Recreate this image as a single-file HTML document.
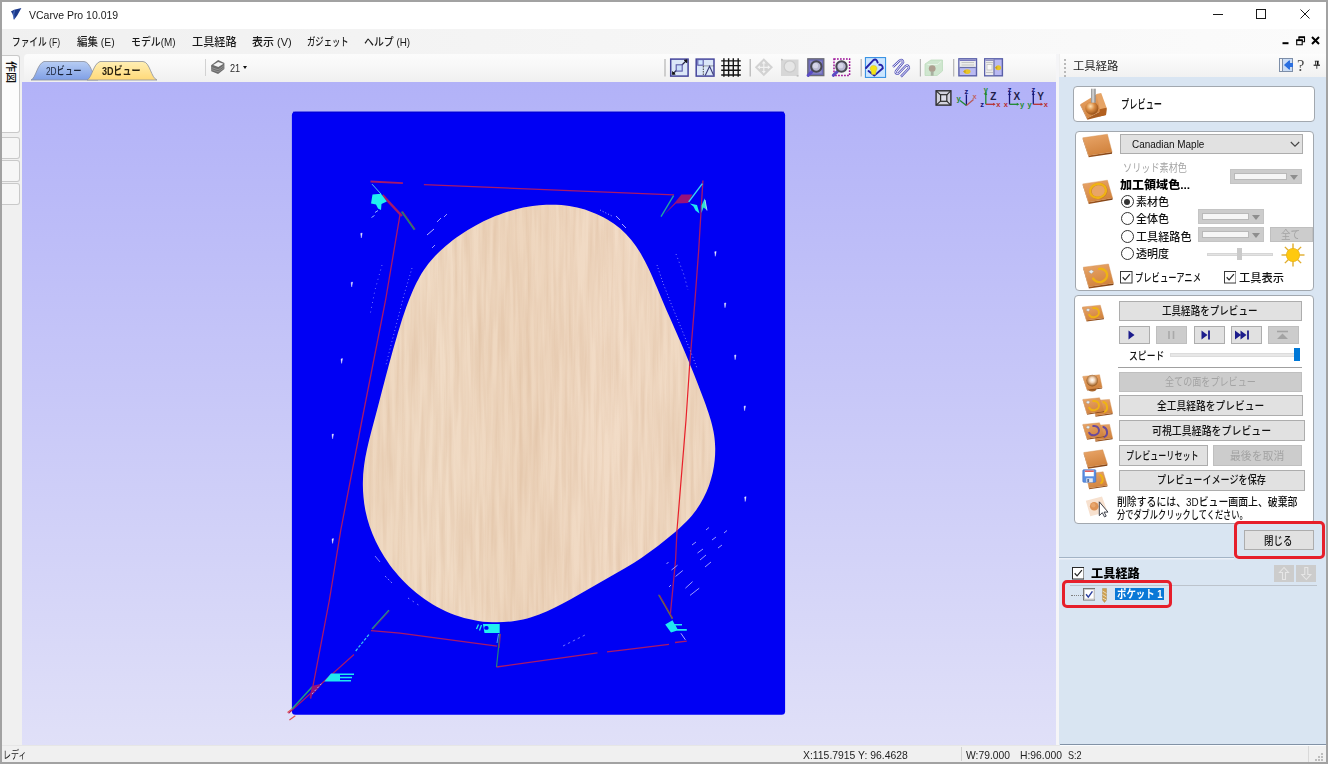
<!DOCTYPE html>
<html lang="ja"><head><meta charset="utf-8"><title>VCarve Pro 10.019</title>
<style>
html,body{margin:0;padding:0}
body{width:1328px;height:764px;position:relative;overflow:hidden;background:#f0f0f0;font-family:"Liberation Sans","Noto Sans CJK JP",sans-serif;font-size:12px;color:#000}
div,span,svg{position:absolute;box-sizing:border-box}
.t{white-space:nowrap;transform-origin:0 50%;display:block}
.btn{background:#e1e1e1;border:1px solid #adadad}
.btn.dis{background:#cccccc;border-color:#bfbfbf}
.box{background:#fff;border:1px solid #a2a8af;border-radius:4px}
.cdd{background:#cccccc;border:1px solid #c4c4c4}
.cdd i{position:absolute;left:3px;top:3px;right:14px;bottom:3px;background:#f6f6f6;border:1px solid #b9b9b9}
.cdd b{position:absolute;right:3px;top:4.500px;width:0;height:0;border-left:4.500px solid transparent;border-right:4.500px solid transparent;border-top:5px solid #8e8e8e}
.radio{width:13px;height:13px;border:1px solid #333;border-radius:50%;background:#fff}
.radio.on::after{content:"";position:absolute;left:2.5px;top:2.5px;width:6px;height:6px;border-radius:50%;background:#333}
.chk{width:13px;height:13px;border:1px solid #333;background:#fff}

</style></head>
<body>
<div style="left:0;top:0;width:1328px;height:764px;background:#a2a2a2"></div>
<div style="left:2px;top:2px;width:1324px;height:760px;background:#f0f0f0"></div>
<div style="left:2px;top:2px;width:1324px;height:27px;background:#fff"></div>
<svg style="left:10px;top:8px" width="12" height="12.500" viewBox="0 0 12 12.500"><path d="M11.400 0L4.100 1.700L0.900 3.400Q2 4.600 2.400 5.800L3.400 9L3.900 12L7.200 7.400Z" fill="#1c3a8c"/><path d="M4.400 2.300Q3.200 6 4 11" stroke="#5a7fd0" stroke-width="0.900" fill="none"/></svg>
<span class="t" style='left:28.6px;top:7.36px;font-size:11px;line-height:17px;color:#1a1a1a;transform:scaleX(0.9534);'>VCarve Pro 10.019</span>
<svg style="left:1200px;top:2px" width="126" height="27" viewBox="0 0 126 27" fill="none" stroke="#1a1a1a" stroke-width="1"><path d="M13 12.5H23"/><rect x="56.5" y="7.5" width="9" height="9"/><path d="M100.5 7.5L109.5 16.5M109.5 7.5L100.5 16.5"/></svg>
<div style="left:2px;top:29px;width:1324px;height:25px;background:linear-gradient(to right,#f0f0f0,#f5f5f5 45%,#fbfbfb)"></div>
<span class="t" style='left:12.3px;top:34.17px;font-size:11.2px;line-height:17px;font-weight:500;color:#1a1a1a;transform:scaleX(0.7755);'>ファイル (F)</span>
<span class="t" style='left:77.4px;top:34.17px;font-size:11.2px;line-height:17px;font-weight:500;color:#1a1a1a;transform:scaleX(0.9330);'>編集 (E)</span>
<span class="t" style='left:130.5px;top:34.17px;font-size:11.2px;line-height:17px;font-weight:500;color:#1a1a1a;transform:scaleX(0.8839);'>モデル(M)</span>
<span class="t" style='left:191.7px;top:34.17px;font-size:11.2px;line-height:17px;font-weight:500;color:#1a1a1a;transform:scaleX(0.9985);'>工具経路</span>
<span class="t" style='left:252.3px;top:34.17px;font-size:11.2px;line-height:17px;font-weight:500;color:#1a1a1a;transform:scaleX(0.9825);'>表示 (V)</span>
<span class="t" style='left:307.4px;top:34.17px;font-size:11.2px;line-height:17px;font-weight:500;color:#1a1a1a;transform:scaleX(0.7435);'>ガジェット</span>
<span class="t" style='left:364.3px;top:34.17px;font-size:11.2px;line-height:17px;font-weight:500;color:#1a1a1a;transform:scaleX(0.8831);'>ヘルプ (H)</span>
<svg style="left:1278px;top:33px" width="46" height="16" viewBox="0 0 46 16" fill="none" stroke="#000"><path d="M4.500 10.200H10.500" stroke-width="2"/><path d="M21 4.200h5.500v4.500h-5.500z" stroke-width="1.100" fill="#f8f8f8"/><path d="M20.500 4.200h6.500" stroke-width="1.800"/><path d="M18.700 7.200h5.500v4.500h-5.500z" stroke-width="1.100" fill="#f8f8f8"/><path d="M18.200 7.200h6.500" stroke-width="1.800"/><path d="M34 4L41 11M41 4L34 11" stroke-width="2"/></svg>
<div style="left:2px;top:54px;width:20px;height:691px;background:#f0f0f0"></div>
<div style="left:2px;top:55px;width:18px;height:78px;background:#fcfcfc;border:1px solid #c9c9c9;border-left:none;border-radius:0 3px 3px 0"></div>
<div style="left:2px;top:137px;width:18px;height:22px;background:#f6f6f6;border:1px solid #c9c9c9;border-left:none;border-radius:0 3px 3px 0"></div>
<div style="left:2px;top:160px;width:18px;height:22px;background:#f6f6f6;border:1px solid #c9c9c9;border-left:none;border-radius:0 3px 3px 0"></div>
<div style="left:2px;top:183px;width:18px;height:22px;background:#f6f6f6;border:1px solid #c9c9c9;border-left:none;border-radius:0 3px 3px 0"></div>
<span class="t" style="left:4px;top:61px;font-size:11px;line-height:13px;writing-mode:vertical-rl;text-orientation:sideways;font-weight:500;color:#111">作図</span>
<div style="left:24px;top:54px;width:1032px;height:28px;background:linear-gradient(#fcfcfc,#f8f8f8 40%,#f0f0f0);border-radius:4px 0 0 0"></div>
<svg style="left:24px;top:56px" width="140" height="26" viewBox="0 0 140 26"><defs><linearGradient id="g2d" x1="0" y1="0" x2="0" y2="1"><stop offset="0" stop-color="#b7cdf3"/><stop offset="1" stop-color="#7f9fe6"/></linearGradient><linearGradient id="g3d" x1="0" y1="0" x2="0" y2="1"><stop offset="0" stop-color="#ffefb4"/><stop offset="1" stop-color="#ffd978"/></linearGradient></defs><path d="M7 24 C12 22 13 8 20 5.500 L60 5.500 C67 6 68 20 74 24 Z" fill="url(#g2d)" stroke="#8a8f9c" stroke-width="0.8"/><path d="M63 24 C68 22 69 8 76 5.500 L119 5.500 C126 6 127 22 133 24 Z" fill="url(#g3d)" stroke="#8a8f9c" stroke-width="0.8"/></svg>
<span class="t" style='left:45.9px;top:63.16px;font-size:11px;line-height:17px;font-weight:500;color:#1a2438;transform:scaleX(0.7543);'>2Dビュー</span>
<span class="t" style='left:102px;top:63.16px;font-size:11px;line-height:17px;font-weight:700;color:#2a2210;transform:scaleX(0.8181);'>3Dビュー</span>
<div style="left:204.500px;top:59px;width:1.500px;height:17px;background:#d2d2d2"></div>
<svg style="left:210px;top:59px" width="16" height="16" viewBox="210 59 16 16"><path d="M211.100 65.300L218.100 60.100L224.400 63V68.900L218.100 73.900L211.300 71.200Z" fill="#6c6c6c"/><path d="M213.100 65.100L218.100 61.900L223.500 63.700L218.300 67.100Z" fill="#f4f4f4"/><path d="M211.600 67.600L218.200 69.800L224.200 65.600M211.600 69.600L218.200 71.800L224.200 67.600" stroke="#a2a2a2" stroke-width="0.700" fill="none"/></svg>
<span class="t" style='left:229.7px;top:59.97px;font-size:11.2px;line-height:17px;color:#2a2a2a;transform:scaleX(0.8191);'>21</span>
<div style="left:243.300px;top:66px;width:0;height:0;border-left:2.700px solid transparent;border-right:2.700px solid transparent;border-top:3px solid #111"></div>
<div style="left:22px;top:82px;width:1034px;height:663px;background:linear-gradient(#b2b2f8,#e0e0f8)"></div>
<svg style="left:22px;top:82px" width="1034" height="663" viewBox="22 82 1034 663"><defs><linearGradient id="wg" x1="0" y1="0" x2="1" y2="0"><stop offset="0" stop-color="#eed7bf"/><stop offset="0.220" stop-color="#f1dcc6"/><stop offset="0.450" stop-color="#eed6be"/><stop offset="0.700" stop-color="#f2dcc7"/><stop offset="1" stop-color="#efd8c1"/></linearGradient><clipPath id="wc"><path d="M532.7 205.9C537.0 205.3 541.4 204.8 546.2 204.7C551.0 204.6 556.3 204.6 561.4 205.1C566.5 205.6 571.9 206.4 577.1 207.6C582.3 208.8 587.6 210.4 592.6 212.4C597.7 214.3 602.7 216.7 607.3 219.4C611.9 222.1 616.2 225.2 620.2 228.6C624.2 232.1 627.9 235.9 631.3 240.1C634.7 244.2 637.8 248.9 640.7 253.6C643.6 258.4 646.2 263.5 648.7 268.7C651.2 273.8 653.3 279.0 655.6 284.5C658.0 289.9 660.2 295.4 662.8 301.4C665.3 307.3 668.1 313.6 671.0 320.2C673.9 326.9 677.1 334.0 680.1 341.1C683.2 348.3 686.5 355.9 689.5 363.2C692.5 370.5 695.6 378.1 698.2 385.0C700.9 391.9 703.5 398.7 705.7 404.7C707.8 410.7 709.6 416.0 711.0 421.1C712.4 426.1 713.4 430.5 714.1 434.9C714.8 439.4 715.1 443.5 715.2 447.7C715.3 451.9 715.1 456.1 714.7 460.3C714.3 464.5 713.6 468.6 712.7 472.8C711.7 477.0 710.5 481.2 709.0 485.4C707.5 489.6 705.7 493.9 703.5 498.0C701.4 502.1 699.0 506.1 696.2 510.0C693.4 513.9 690.4 517.4 686.7 521.3C683.0 525.1 678.7 529.0 674.0 533.1C669.2 537.1 663.6 541.7 658.2 545.8C652.9 549.9 647.1 554.0 641.7 557.7C636.3 561.3 631.0 564.5 625.7 567.7C620.4 570.9 615.2 573.8 610.0 576.8C604.8 579.8 599.5 582.7 594.3 585.7C589.1 588.7 583.8 591.8 578.6 594.8C573.3 597.8 568.1 600.8 562.8 603.6C557.6 606.3 552.4 609.0 547.1 611.3C541.8 613.6 536.6 615.6 531.2 617.2C525.8 618.9 520.3 620.2 514.6 621.0C508.9 621.9 502.9 622.3 496.8 622.3C490.8 622.3 484.5 621.9 478.2 620.9C472.0 620.0 465.7 618.5 459.5 616.5C453.3 614.6 447.1 612.0 441.2 609.0C435.3 606.0 429.5 602.5 424.1 598.7C418.7 594.9 413.5 590.6 408.7 586.2C403.9 581.8 399.4 577.0 395.4 572.1C391.3 567.3 387.7 562.1 384.4 557.0C381.1 551.9 378.3 546.6 375.8 541.5C373.3 536.3 371.3 531.2 369.6 526.2C367.9 521.2 366.6 516.4 365.6 511.5C364.6 506.7 363.9 502.0 363.5 497.1C363.0 492.2 362.8 487.3 362.9 482.1C362.9 477.0 363.3 471.8 364.0 466.3C364.7 460.8 365.7 455.1 367.0 449.3C368.2 443.4 369.9 437.3 371.4 431.2C373.0 425.0 374.7 418.9 376.4 412.4C378.1 405.9 379.8 399.4 381.6 392.4C383.4 385.4 385.4 377.8 387.4 370.4C389.4 363.0 391.6 354.9 393.6 347.8C395.7 340.6 397.7 333.5 399.7 327.2C401.6 321.0 403.4 315.5 405.2 310.3C407.0 305.1 408.7 300.6 410.6 296.0C412.5 291.4 414.3 287.1 416.5 282.8C418.7 278.5 420.9 274.3 423.7 270.2C426.5 266.0 429.6 261.9 433.3 257.9C436.9 253.8 441.2 249.8 445.7 246.0C450.1 242.2 455.2 238.4 460.2 235.0C465.2 231.6 470.5 228.3 475.7 225.5C480.9 222.6 486.3 220.0 491.4 217.8C496.5 215.6 501.8 213.7 506.6 212.1C511.4 210.5 515.8 209.3 520.1 208.2C524.5 207.2 528.3 206.5 532.7 205.9Z"/></clipPath><filter id="grain" x="0" y="0" width="100%" height="100%" color-interpolation-filters="sRGB"><feTurbulence type="fractalNoise" baseFrequency="0.220 0.010" numOctaves="3" seed="11"/><feColorMatrix type="matrix" values="0 0 0 0 0.700  0 0 0 0 0.480  0 0 0 0 0.300  0.300 0 0 0 -0.090"/></filter></defs><rect x="291.900" y="111.700" width="493.200" height="603.100" rx="3.500" fill="#0000f4"/><rect x="293" y="111.700" width="491" height="1" fill="#0000d0"/><path d="M532.7 205.9C537.0 205.3 541.4 204.8 546.2 204.7C551.0 204.6 556.3 204.6 561.4 205.1C566.5 205.6 571.9 206.4 577.1 207.6C582.3 208.8 587.6 210.4 592.6 212.4C597.7 214.3 602.7 216.7 607.3 219.4C611.9 222.1 616.2 225.2 620.2 228.6C624.2 232.1 627.9 235.9 631.3 240.1C634.7 244.2 637.8 248.9 640.7 253.6C643.6 258.4 646.2 263.5 648.7 268.7C651.2 273.8 653.3 279.0 655.6 284.5C658.0 289.9 660.2 295.4 662.8 301.4C665.3 307.3 668.1 313.6 671.0 320.2C673.9 326.9 677.1 334.0 680.1 341.1C683.2 348.3 686.5 355.9 689.5 363.2C692.5 370.5 695.6 378.1 698.2 385.0C700.9 391.9 703.5 398.7 705.7 404.7C707.8 410.7 709.6 416.0 711.0 421.1C712.4 426.1 713.4 430.5 714.1 434.9C714.8 439.4 715.1 443.5 715.2 447.7C715.3 451.9 715.1 456.1 714.7 460.3C714.3 464.5 713.6 468.6 712.7 472.8C711.7 477.0 710.5 481.2 709.0 485.4C707.5 489.6 705.7 493.9 703.5 498.0C701.4 502.1 699.0 506.1 696.2 510.0C693.4 513.9 690.4 517.4 686.7 521.3C683.0 525.1 678.7 529.0 674.0 533.1C669.2 537.1 663.6 541.7 658.2 545.8C652.9 549.9 647.1 554.0 641.7 557.7C636.3 561.3 631.0 564.5 625.7 567.7C620.4 570.9 615.2 573.8 610.0 576.8C604.8 579.8 599.5 582.7 594.3 585.7C589.1 588.7 583.8 591.8 578.6 594.8C573.3 597.8 568.1 600.8 562.8 603.6C557.6 606.3 552.4 609.0 547.1 611.3C541.8 613.6 536.6 615.6 531.2 617.2C525.8 618.9 520.3 620.2 514.6 621.0C508.9 621.9 502.9 622.3 496.8 622.3C490.8 622.3 484.5 621.9 478.2 620.9C472.0 620.0 465.7 618.5 459.5 616.5C453.3 614.6 447.1 612.0 441.2 609.0C435.3 606.0 429.5 602.5 424.1 598.7C418.7 594.9 413.5 590.6 408.7 586.2C403.9 581.8 399.4 577.0 395.4 572.1C391.3 567.3 387.7 562.1 384.4 557.0C381.1 551.9 378.3 546.6 375.8 541.5C373.3 536.3 371.3 531.2 369.6 526.2C367.9 521.2 366.6 516.4 365.6 511.5C364.6 506.7 363.9 502.0 363.5 497.1C363.0 492.2 362.8 487.3 362.9 482.1C362.9 477.0 363.3 471.8 364.0 466.3C364.7 460.8 365.7 455.1 367.0 449.3C368.2 443.4 369.9 437.3 371.4 431.2C373.0 425.0 374.7 418.9 376.4 412.4C378.1 405.9 379.8 399.4 381.6 392.4C383.4 385.4 385.4 377.8 387.4 370.4C389.4 363.0 391.6 354.9 393.6 347.8C395.7 340.6 397.7 333.5 399.7 327.2C401.6 321.0 403.4 315.5 405.2 310.3C407.0 305.1 408.7 300.6 410.6 296.0C412.5 291.4 414.3 287.1 416.5 282.8C418.7 278.5 420.9 274.3 423.7 270.2C426.5 266.0 429.6 261.9 433.3 257.9C436.9 253.8 441.2 249.8 445.7 246.0C450.1 242.2 455.2 238.4 460.2 235.0C465.2 231.6 470.5 228.3 475.7 225.5C480.9 222.6 486.3 220.0 491.4 217.8C496.5 215.6 501.8 213.7 506.6 212.1C511.4 210.5 515.8 209.3 520.1 208.2C524.5 207.2 528.3 206.5 532.7 205.9Z" fill="url(#wg)"/><rect x="360" y="200" width="360" height="428" filter="url(#grain)" clip-path="url(#wc)"/><path d="M370.5 181.5L402.9 183.1" stroke="#aa1868" stroke-width="1.8" fill="none" /><path d="M423.9 184.7L674.1 194.9" stroke="#aa1868" stroke-width="1.3" fill="none" /><path d="M400.3 212.9L385.6 300L362 420L340.8 530L329.4 600L310.6 698.7" stroke="#aa1868" stroke-width="1.3" fill="none" /><path d="M702.9 180.5L698.7 250L695 300L689.6 366" stroke="#aa1868" stroke-width="1.3" fill="none" /><path d="M689.6 366L686 420L677 530" stroke="#e8202a" stroke-width="1.2" fill="none" /><path d="M677 530L675.6 560L670.4 613.7" stroke="#aa1868" stroke-width="1.3" fill="none" /><path d="M371 630.6L400 633.2L497.1 646.1" stroke="#aa1868" stroke-width="1.3" fill="none" /><path d="M496.5 667L560 658.1L597.5 652.9" stroke="#aa1868" stroke-width="1.3" fill="none" /><path d="M607 651.8L620 650.3L669 644.4" stroke="#aa1868" stroke-width="1.3" fill="none" /><path d="M675 642.5L686.8 641.2" stroke="#aa1868" stroke-width="1.3" fill="none" /><path d="M382.5 195.1L401.9 216" stroke="#a81868" stroke-width="2.4" fill="none" /><path d="M401.6 211.6L414.5 229.7" stroke="#1f8a70" stroke-width="1.6" fill="none" /><path d="M402.6 211.2L415.3 229.2" stroke="#a03050" stroke-width="0.8" fill="none" /><path d="M372 184.1L381 194" stroke="#50c8f0" stroke-width="1" fill="none" /><path d="M663.600 215L674.500 203L681.400 194.600H692.400L688.200 203L676 203.500Z" fill="#98127a"/><path d="M673.6 195.7L661 216.6" stroke="#22a8a0" stroke-width="1.3" fill="none" /><path d="M702.4 183.6L688.7 201.9" stroke="#38d8f0" stroke-width="1.4" fill="none" /><path d="M689.800 203.500L697 205L699.500 213.500L695.500 210.500L693.500 206.500Z" fill="#20e8f0"/><path d="M701.500 205.500L704.800 198.300L706.800 210L703.500 207.500L701.500 213Z" fill="#30e0d0"/><path d="M705 200L707 210.500" stroke="#c8f4ff" stroke-width="0.800"/><path d="M372.500 194.500L381 193.800L386.800 201.500L381.500 204L381 210L378 208.500L376 204.500L371 203.500Z" fill="#20f0f0"/><path d="M375 212.5L378 210.5" stroke="#8fb0ff" stroke-width="1" fill="none" /><path d="M371.5 217.5L374.5 215.5" stroke="#8fb0ff" stroke-width="1" fill="none" /><path d="M288.5 713.2L354 654.5" stroke="#aa1868" stroke-width="1.2" fill="none" /><path d="M289.4 720L295.3 715.7" stroke="#e05050" stroke-width="1.1" fill="none" /><path d="M287.5 712.5L291.5 709.5" stroke="#e05050" stroke-width="1.1" fill="none" /><path d="M291.9 708.9L312.3 686.8" stroke="#20a080" stroke-width="1.5" fill="none" /><path d="M371.9 628.9L388.9 610.2" stroke="#20a080" stroke-width="1.2" fill="none" /><path d="M372.8 629.4L389.6 610.8" stroke="#a03050" stroke-width="0.7" fill="none" /><path d="M355.7 651L369.4 634" stroke="#38c8f0" stroke-width="1.2" fill="none" stroke-dasharray="3 1.500"/><path d="M309.500 698L312 686L322.500 683.500L316 691Z" fill="#98127a"/><path d="M324.300 681.500L331 673.500H354V675H340V676.800H352V678.300H340V680H351V681.500Z" fill="#20e8f0"/><path d="M312 694L322 683" stroke="#8fb0ff" stroke-width="1" fill="none" stroke-dasharray="2 2"/><path d="M482.900 624.100H499.700V633H484.500Z" fill="#20f0f0"/><rect x="484.300" y="625.900" width="4.200" height="3.800" rx="1.500" fill="#0000fe"/><path d="M476.500 629l2 -4.500M479.500 630.500l2 -5.500" stroke="#20e8f0" stroke-width="1.300"/><path d="M499.7 633.5L498.5 648L496.5 667" stroke="#208878" stroke-width="1.2" fill="none" /><path d="M500.5 634L499.2 648" stroke="#902070" stroke-width="0.9" fill="none" /><path d="M498.5 634L497 643" stroke="#58b0f0" stroke-width="0.9" fill="none" /><path d="M658.6 594.7L672.4 618.9" stroke="#5a7a50" stroke-width="1.3" fill="none" /><path d="M659.6 595L672.8 618" stroke="#b02040" stroke-width="0.8" fill="none" /><path d="M665.200 624.500L672.500 620.200L674.500 624H682V625.500H675.500L677.500 629H686.800V630.800H676.500L671 632.600Z" fill="#20e8f0"/><path d="M680.9 633.3L685.4 639.8" stroke="#d8d8ff" stroke-width="0.8" fill="none" /><path d="M666.5 564L668.5 562" stroke="#9c9cff" stroke-width="1" fill="none" /><path d="M671.5 570L677.5 565.2" stroke="#9c9cff" stroke-width="1" fill="none" /><path d="M675.6 576.4L682.8 570.5" stroke="#9c9cff" stroke-width="1" fill="none" /><path d="M669 587L671 585" stroke="#9c9cff" stroke-width="1" fill="none" /><path d="M685.4 588.2L692.6 581.6" stroke="#9c9cff" stroke-width="1" fill="none" /><path d="M690 595.4L699.2 588.2" stroke="#9c9cff" stroke-width="1" fill="none" /><path d="M697.5 553L703 549" stroke="#9c9cff" stroke-width="1" fill="none" /><path d="M700 560L706 555" stroke="#9c9cff" stroke-width="1" fill="none" /><path d="M705 567L711 562" stroke="#9c9cff" stroke-width="1" fill="none" /><path d="M692 545L696 542" stroke="#9c9cff" stroke-width="1" fill="none" /><path d="M712 540L716 537" stroke="#9c9cff" stroke-width="1" fill="none" /><path d="M718 548L722 545" stroke="#9c9cff" stroke-width="1" fill="none" /><path d="M706 530L709 527.5" stroke="#9c9cff" stroke-width="1" fill="none" /><path d="M724 533L727 530.5" stroke="#9c9cff" stroke-width="1" fill="none" /><path d="M341 358.9l1.500 -0.300l-0.900 4.800z" fill="#f4f4ff" stroke="#e8e8ff" stroke-width="0.400"/><path d="M332 434.3l1.500 -0.300l-0.900 4.800z" fill="#f4f4ff" stroke="#e8e8ff" stroke-width="0.400"/><path d="M332 538.9l1.500 -0.300l-0.900 4.800z" fill="#f4f4ff" stroke="#e8e8ff" stroke-width="0.400"/><path d="M724.4 303.2l1.500 -0.300l-0.900 4.800z" fill="#f4f4ff" stroke="#e8e8ff" stroke-width="0.400"/><path d="M734.5 355.2l1.500 -0.300l-0.900 4.800z" fill="#f4f4ff" stroke="#e8e8ff" stroke-width="0.400"/><path d="M744 406.2l1.500 -0.300l-0.900 4.800z" fill="#f4f4ff" stroke="#e8e8ff" stroke-width="0.400"/><path d="M744.6 497l1.500 -0.300l-0.900 4.800z" fill="#f4f4ff" stroke="#e8e8ff" stroke-width="0.400"/><path d="M360.7 233.4l1.500 -0.300l-0.900 4.800z" fill="#f4f4ff" stroke="#e8e8ff" stroke-width="0.400"/><path d="M351.1 282.4l1.500 -0.300l-0.900 4.800z" fill="#f4f4ff" stroke="#e8e8ff" stroke-width="0.400"/><path d="M714.7 251.8l1.500 -0.300l-0.900 4.800z" fill="#f4f4ff" stroke="#e8e8ff" stroke-width="0.400"/><path d="M657 265L663 283L672 306L682 330L690 350L697 368" stroke="#b4b4ff" stroke-width="0.9" fill="none" stroke-dasharray="0.800 2.600"/><path d="M676 254L684 275L688 290" stroke="#b4b4ff" stroke-width="0.9" fill="none" stroke-dasharray="0.800 3.400"/><path d="M412 268L404 295L398 318L391 345L386 365" stroke="#a8a8ff" stroke-width="0.9" fill="none" stroke-dasharray="0.800 3"/><path d="M382 265L375 290L370 315" stroke="#9c9cff" stroke-width="0.9" fill="none" stroke-dasharray="0.800 4"/><path d="M427 235L434 229" stroke="#c8c8ff" stroke-width="0.9" fill="none" /><path d="M437 222L441 218" stroke="#a8a8ff" stroke-width="0.9" fill="none" /><path d="M444 217L447 214" stroke="#a8a8ff" stroke-width="0.9" fill="none" /><path d="M432 248L435 245" stroke="#a8a8ff" stroke-width="0.9" fill="none" /><path d="M616 216L620 220" stroke="#a8a8ff" stroke-width="1" fill="none" /><path d="M622 224L626 228" stroke="#a8a8ff" stroke-width="1" fill="none" /><path d="M600 210L612 216" stroke="#c8c8ff" stroke-width="0.8" fill="none" stroke-dasharray="1 2"/><path d="M375 556L380 562" stroke="#8c8cff" stroke-width="0.9" fill="none" /><path d="M385 576L392 583" stroke="#8c8cff" stroke-width="0.9" fill="none" stroke-dasharray="2 2"/><path d="M408 598L420 606" stroke="#8c8cff" stroke-width="0.9" fill="none" stroke-dasharray="1.500 4"/><path d="M563 646L585 635" stroke="#7c7cff" stroke-width="0.9" fill="none" stroke-dasharray="2.500 3"/></svg>
<svg style="left:660px;top:54px" width="396" height="28" viewBox="660 54 396 28"><path d="M665 59V76.500" stroke="#b4b4b4" stroke-width="1.200"/><path d="M750.2 59V76.500" stroke="#b4b4b4" stroke-width="1.200"/><path d="M861.2 59V76.500" stroke="#b4b4b4" stroke-width="1.200"/><path d="M920.4 59V76.500" stroke="#b4b4b4" stroke-width="1.200"/><path d="M953.7 59V76.500" stroke="#b4b4b4" stroke-width="1.200"/><rect x="670.700" y="59.100" width="17.400" height="17" fill="#dbe7f8" stroke="#45459c" stroke-width="1.500"/><path d="M673.500 73.200L686 61" stroke="#2a2a4a" stroke-width="1.200"/><rect x="676.200" y="64.800" width="6" height="6.300" fill="#c9ddf8" stroke="#5a5aa8" stroke-width="1.100"/><path d="M672.300 74.400L672.600 71.600L675.200 74.200ZM687 59.800L686.800 62.800L684.200 60.200Z" fill="#111" stroke="#111" stroke-width="0.800"/><rect x="696.200" y="59.100" width="17.800" height="17" fill="#dbe7f8" stroke="#45459c" stroke-width="1.500"/><rect x="697.800" y="59.600" width="5.400" height="5.600" fill="#cfe4ff" stroke="#5a5aa8" stroke-width="1.100"/><path d="M703.500 65.900H714" stroke="#333" stroke-width="0.900" stroke-dasharray="1 1"/><path d="M703.300 66V76" stroke="#333" stroke-width="0.900" stroke-dasharray="1.500 1"/><path d="M705.200 75.400L709.600 66.200L713.400 74.700" fill="none" stroke="#3a3a78" stroke-width="1.100"/><path d="M723.9 58.200V76.800M728.6 58.200V76.800M733.3 58.200V76.800M738.2 58.200V76.800M721.200 60.9H740.800M721.200 65.6H740.800M721.200 70.3H740.800M721.200 75H740.800" stroke="#151515" stroke-width="1.400" fill="none"/><path d="M763.800 58.300L773 67.300L763.800 76.300L754.800 67.300Z" fill="#d2d2d2"/><path d="M763.800 61L765.800 63.600H761.800ZM763.800 73.600L765.800 71H761.800ZM757.400 67.300L760 65.300V69.300ZM770.400 67.300L767.800 65.300V69.300Z" fill="#f4f4f4"/><path d="M763.800 63V71.600M759.500 67.300H768.200" stroke="#f1f1f1" stroke-width="1.200"/><rect x="781" y="59.500" width="17.500" height="16.500" fill="#d7d7d7"/><circle cx="789.800" cy="66.500" r="5.600" fill="#e6e6e6" stroke="#cbcbcb" stroke-width="1.200"/><path d="M781 59.500l1.800 0.200M798.500 76l-1.800 -0.200" stroke="#bdbdbd" stroke-width="1.500"/><rect x="807.800" y="58.800" width="16" height="16.800" fill="#6c6ab8" stroke="#6a6a74" stroke-width="1.300"/><rect x="809.800" y="60.800" width="12" height="12.800" fill="#8a88c8"/><path d="M812.3 71.3L808.1 75.3" stroke="#5a4cc4" stroke-width="3" stroke-linecap="round"/><circle cx="816.3" cy="66.5" r="5.200" fill="#b9b9d2" stroke="#484852" stroke-width="2"/><circle cx="815.5" cy="65.7" r="2.600" fill="#dcdcee" opacity="0.800"/><rect x="834" y="58.900" width="15.600" height="16.600" fill="none" stroke="#9c0f98" stroke-width="1.500" stroke-dasharray="1.700 1.300"/><path d="M837.5 71.3L833.3 75.3" stroke="#5a4cc4" stroke-width="3" stroke-linecap="round"/><circle cx="841.5" cy="66.5" r="5.200" fill="#b9b9d2" stroke="#484852" stroke-width="2"/><circle cx="840.7" cy="65.7" r="2.600" fill="#dcdcee" opacity="0.800"/><rect x="865.400" y="57.600" width="20.200" height="19.800" fill="#cce6ff" stroke="#2b8ae2" stroke-width="1"/><path d="M866 68L873.200 60.300Q876.200 57.800 877.700 62.600M868.500 71L874.300 75.600L882.800 68.200Q882.500 64.300 879.300 64.800" fill="none" stroke="#2323a8" stroke-width="1.900" stroke-linejoin="round" stroke-linecap="round"/><path d="M873.600 65.400C876.800 65.400 877.900 68.600 876.200 70.600L875.400 74.400H871.800L871 70.600C869.300 68.600 870.400 65.400 873.600 65.400Z" fill="#f4e416" stroke="#cdbf28" stroke-width="0.500"/><path d="M893 66.800L899.600 60.600Q902.400 58.800 903.200 62.200L896 71Q894.600 73.800 898 73.800L905.600 66Q908.600 64.400 909 68.200L901 76.600" fill="none" stroke="#5252ba" stroke-width="2.300" stroke-linejoin="round"/><path d="M893 66.800L899.600 60.600Q902.400 58.800 903.200 62.200L896 71Q894.600 73.800 898 73.800L905.600 66Q908.600 64.400 909 68.200L901 76.600" fill="none" stroke="#ececfa" stroke-width="1" stroke-linejoin="round"/><path d="M925 64L931 60H942.500V71L937 75.500H925Z" fill="#cfe6cf" stroke="#bcdcbc" stroke-width="0.800"/><path d="M927.500 64.500H937.500L941 61.500" fill="none" stroke="#e6f4e6" stroke-width="1"/><circle cx="932.200" cy="68.600" r="3.400" fill="#ad9f90"/><rect x="930.800" y="71.500" width="2.800" height="4.200" fill="#a8b0a0"/><rect x="958.900" y="58.800" width="17.600" height="17" fill="#b9b9f2" stroke="#5a60a8" stroke-width="1.400"/><rect x="959.600" y="59.500" width="16.200" height="8" fill="#ececec"/><path d="M959.600 60.200H975.800" stroke="#6a6ab8" stroke-width="1.400"/><path d="M959.600 67.500H975.800" stroke="#6a70a8" stroke-width="1.200"/><path d="M961.500 62.500H974M961.500 65H974" stroke="#c4c4c4" stroke-width="1.200"/><ellipse cx="967.200" cy="71.600" rx="3.400" ry="2.300" fill="#e8c528"/><path d="M963 71.600l2.600 -1.600v3.200z" fill="#c8a020"/><rect x="984.700" y="58.800" width="17.700" height="17" fill="#b9b9f2" stroke="#5a60a8" stroke-width="1.400"/><rect x="985.400" y="59.500" width="8.300" height="15.600" fill="#ececec"/><path d="M994 59.500V75.500" stroke="#6a70a8" stroke-width="1.200"/><path d="M985.400 60.200H993.500" stroke="#7a7ab8" stroke-width="1.200"/><rect x="987" y="64.500" width="5" height="5.500" fill="#f8f8f8" stroke="#c0c0c0" stroke-width="0.800"/><path d="M986 62.500H993M986 72.500H993" stroke="#c4c4c4" stroke-width="1"/><ellipse cx="998.300" cy="67.700" rx="2.800" ry="2.500" fill="#e8c528"/><path d="M994.800 67.700l2.400 -1.600v3.200z" fill="#c8a020"/></svg>
<svg style="left:930px;top:84px" width="126" height="28" viewBox="930 84 126 28"><rect x="936.100" y="90.800" width="14.800" height="14.300" fill="#d2d2dc" stroke="#2c2c2c" stroke-width="1.400"/><path d="M936.500 91.200L940.500 94.800M950.500 91.200L946.800 94.800M936.500 104.800L940.500 101.200M950.500 104.800L946.800 101.200" stroke="#2c2c2c" stroke-width="1.100"/><rect x="940.600" y="94.700" width="6.200" height="6.600" fill="#dedee8" stroke="#2c2c2c" stroke-width="1.200"/><path d="M966.400 105.500V94.500" stroke="#151578" stroke-width="1.300"/><path d="M966.400 105.500L960 100.500" stroke="#1e8a2e" stroke-width="1.300"/><path d="M966.400 105.500L973.500 99.500" stroke="#b85a5a" stroke-width="1.300"/><text x="966.4" y="93.8" fill="#151578" font-size="7.5" text-anchor="middle" style="font-family:&quot;Liberation Sans&quot;,sans-serif;font-weight:700;">z</text><text x="958.6" y="100.6" fill="#1e8a2e" font-size="7.5" text-anchor="middle" style="font-family:&quot;Liberation Sans&quot;,sans-serif;font-weight:700;">y</text><text x="974.6" y="99.2" fill="#c06464" font-size="7.5" text-anchor="middle" style="font-family:&quot;Liberation Sans&quot;,sans-serif;font-weight:700;">x</text><path d="M985.8 104.300V92" stroke="#1e8a2e" stroke-width="1.300"/><path d="M985.8 92.500l-1.500 2.500h3z" fill="#1e8a2e"/><path d="M985.8 104.300H994.3" stroke="#b83030" stroke-width="1.300"/><path d="M995.6 104.300l-2.500 -1.500v3z" fill="#b83030"/><text x="985.8" y="92" fill="#1e8a2e" font-size="7.5" text-anchor="middle" style="font-family:&quot;Liberation Sans&quot;,sans-serif;font-weight:700;">y</text><text x="982.2" y="107" fill="#151578" font-size="7.5" text-anchor="middle" style="font-family:&quot;Liberation Sans&quot;,sans-serif;font-weight:700;">z</text><text x="998.4" y="107" fill="#b83030" font-size="7.5" text-anchor="middle" style="font-family:&quot;Liberation Sans&quot;,sans-serif;font-weight:700;">x</text><text x="993.2" y="100" fill="#1e1e4a" font-size="10" text-anchor="middle" style="font-family:&quot;Liberation Sans&quot;,sans-serif;font-weight:700;">Z</text><path d="M1009.5 104.300V92" stroke="#151578" stroke-width="1.300"/><path d="M1009.5 92.500l-1.500 2.500h3z" fill="#151578"/><path d="M1009.5 104.300H1018" stroke="#1e8a2e" stroke-width="1.300"/><path d="M1019.3 104.300l-2.500 -1.500v3z" fill="#1e8a2e"/><text x="1009.5" y="92" fill="#151578" font-size="7.5" text-anchor="middle" style="font-family:&quot;Liberation Sans&quot;,sans-serif;font-weight:700;">z</text><text x="1005.9" y="107" fill="#b83030" font-size="7.5" text-anchor="middle" style="font-family:&quot;Liberation Sans&quot;,sans-serif;font-weight:700;">x</text><text x="1022.1" y="107" fill="#1e8a2e" font-size="7.5" text-anchor="middle" style="font-family:&quot;Liberation Sans&quot;,sans-serif;font-weight:700;">y</text><text x="1016.9" y="100" fill="#1e1e4a" font-size="10" text-anchor="middle" style="font-family:&quot;Liberation Sans&quot;,sans-serif;font-weight:700;">X</text><path d="M1033.3 104.300V92" stroke="#151578" stroke-width="1.300"/><path d="M1033.3 92.500l-1.500 2.500h3z" fill="#151578"/><path d="M1033.3 104.300H1041.8" stroke="#b83030" stroke-width="1.300"/><path d="M1043.1 104.300l-2.500 -1.500v3z" fill="#b83030"/><text x="1033.3" y="92" fill="#151578" font-size="7.5" text-anchor="middle" style="font-family:&quot;Liberation Sans&quot;,sans-serif;font-weight:700;">z</text><text x="1029.7" y="107" fill="#1e8a2e" font-size="7.5" text-anchor="middle" style="font-family:&quot;Liberation Sans&quot;,sans-serif;font-weight:700;">y</text><text x="1045.9" y="107" fill="#b83030" font-size="7.5" text-anchor="middle" style="font-family:&quot;Liberation Sans&quot;,sans-serif;font-weight:700;">x</text><text x="1040.7" y="100" fill="#1e1e4a" font-size="10" text-anchor="middle" style="font-family:&quot;Liberation Sans&quot;,sans-serif;font-weight:700;">Y</text></svg>
<div style="left:1056px;top:54px;width:3px;height:691px;background:#f5f5f7"></div>
<div style="left:1060px;top:54px;width:1266px;height:23px;width:266px;background:linear-gradient(#fdfdfd,#f1f1f1)"></div>
<div style="left:1059px;top:77px;width:267px;height:668px;background:#d9e5f2"></div>
<svg style="left:0;top:0" width="0" height="0"><defs><linearGradient id="slabT" x1="0" y1="0" x2="0.350" y2="1"><stop offset="0" stop-color="#eaa76b"/><stop offset="1" stop-color="#d2843f"/></linearGradient><linearGradient id="slabS" x1="0" y1="0" x2="1" y2="0"><stop offset="0" stop-color="#9c541e"/><stop offset="1" stop-color="#7c3f14"/></linearGradient><radialGradient id="ballG" cx="0.400" cy="0.350" r="0.700"><stop offset="0" stop-color="#ffe2b4"/><stop offset="0.450" stop-color="#d98c44"/><stop offset="1" stop-color="#8f4a14"/></radialGradient><radialGradient id="ballW" cx="0.500" cy="0.450" r="0.600"><stop offset="0" stop-color="#ffffff"/><stop offset="0.350" stop-color="#f3d9c0"/><stop offset="0.800" stop-color="#a86a30"/><stop offset="1" stop-color="#7a4a20"/></radialGradient><linearGradient id="shaftG" x1="0" y1="0" x2="1" y2="0"><stop offset="0" stop-color="#8d8d8d"/><stop offset="0.450" stop-color="#dcdcdc"/><stop offset="0.700" stop-color="#a8a8a8"/><stop offset="1" stop-color="#8a8a8a"/></linearGradient></defs></svg>
<svg style="left:1062px;top:58px" width="6" height="20" viewBox="0 0 6 20" fill="#b9b9b9"><rect x="2" y="1" width="2" height="2"/><rect x="2" y="5" width="2" height="2"/><rect x="2" y="9" width="2" height="2"/><rect x="2" y="13" width="2" height="2"/><rect x="2" y="17" width="2" height="2"/></svg>
<span class="t" style='left:1073.2px;top:57.96px;font-size:11px;line-height:17px;color:#222;transform:scaleX(1.0318);'>工具経路</span>
<svg style="left:1278px;top:57px" width="46" height="17" viewBox="0 0 46 17"><rect x="1.500" y="1.500" width="13" height="13" fill="#c9dcf6" stroke="#7d8ea8"/><rect x="1.500" y="1.500" width="3" height="13" fill="#f4f4f4" stroke="#7d8ea8"/><path d="M15 8L9.500 3V6H6.500V10H9.500V13Z" transform="translate(21.500 0) scale(-1 1)" fill="#2a6fe0"/><path d="M6 8L11 3.500V6.500H15V9.500H11V12.500Z" fill="#2a6fe0"/></svg>
<span class="t" style='left:1297px;top:54.12px;font-size:17px;line-height:23px;color:#4a4a4a;font-family:"Liberation Serif",serif;transform:scaleX(0.9805);'>?</span>
<svg style="left:1311.500px;top:59.500px" width="9.600" height="9.600" viewBox="0 0 12 12" fill="none" stroke="#111"><path d="M3.500 1.500H8.500M4.500 1.500V6M7.500 1.500V6" stroke-width="1"/><path d="M7 1.500V6" stroke-width="1.600"/><path d="M2 6.500H10" stroke-width="1.400"/><path d="M6 7V11" stroke-width="1"/></svg>
<div class="box" style="left:1073px;top:86px;width:242px;height:36px"></div>
<span class="t" style='left:1120.6px;top:96.1px;font-size:12.5px;line-height:18px;font-weight:500;color:#111;transform:scaleX(0.6574);'>プレビュー</span>
<div class="box" style="left:1075px;top:131px;width:239px;height:160px"></div>
<div class="btn" style="left:1120px;top:134px;width:183px;height:20px"></div>
<span class="t" style='left:1131.6px;top:136.46px;font-size:11px;line-height:17px;font-weight:500;color:#111;transform:scaleX(0.9036);'>Canadian Maple</span>
<svg style="left:1289px;top:140px" width="12" height="8" viewBox="0 0 12 8"><path d="M1.800 2L6 6.200L10.200 2" fill="none" stroke="#444" stroke-width="1.100"/></svg>
<span class="t" style='left:1123px;top:160.16px;font-size:11px;line-height:17px;color:#a3a3a3;transform:scaleX(0.8312);'>ソリッド素材色</span>
<div class="cdd" style="left:1229.500px;top:169px;width:72px;height:15px"><i></i><b></b></div>
<span class="t" style='left:1120px;top:177.14px;font-size:11.5px;line-height:17px;font-weight:900;transform:scaleX(1.0463);'>加工領域色...</span>
<div class="radio on" style="left:1120.500px;top:195px"></div>
<span class="t" style='left:1136.3px;top:193.87px;font-size:11.2px;line-height:17px;font-weight:500;color:#111;transform:scaleX(0.9858);'>素材色</span>
<div class="radio" style="left:1120.500px;top:212.2px"></div>
<span class="t" style='left:1136.3px;top:211.07px;font-size:11.2px;line-height:17px;font-weight:500;color:#111;transform:scaleX(0.9858);'>全体色</span>
<div class="radio" style="left:1120.500px;top:229.8px"></div>
<span class="t" style='left:1136.3px;top:228.67px;font-size:11.2px;line-height:17px;font-weight:500;color:#111;transform:scaleX(0.9919);'>工具経路色</span>
<div class="radio" style="left:1120.500px;top:246.9px"></div>
<span class="t" style='left:1136.3px;top:245.77px;font-size:11.2px;line-height:17px;font-weight:500;color:#111;transform:scaleX(0.9858);'>透明度</span>
<div class="cdd" style="left:1197.500px;top:209px;width:66px;height:15px"><i></i><b></b></div>
<div class="cdd" style="left:1197.500px;top:227px;width:66px;height:15px"><i></i><b></b></div>
<div class="btn dis" style="left:1269.500px;top:227px;width:43px;height:15px"></div>
<span class="t" style='left:1281.2px;top:227.36px;font-size:11px;line-height:17px;color:#a3a3a3;transform:scaleX(0.8727);'>全て</span>
<div style="left:1207px;top:252.500px;width:65.500px;height:3px;background:#e3e3e3;border:1px solid #d6d6d6"></div>
<div style="left:1236.500px;top:247.500px;width:5.500px;height:12.500px;background:#cacaca"></div>
<svg style="left:1280px;top:242px" width="26" height="26" viewBox="-13 -13 26 26"><g stroke="#e0ad2c" stroke-width="1.400"><line x1="6.00" y1="0.00" x2="11.50" y2="0.00"/><line x1="4.24" y1="4.24" x2="8.13" y2="8.13"/><line x1="0.00" y1="6.00" x2="0.00" y2="11.50"/><line x1="-4.24" y1="4.24" x2="-8.13" y2="8.13"/><line x1="-6.00" y1="0.00" x2="-11.50" y2="0.00"/><line x1="-4.24" y1="-4.24" x2="-8.13" y2="-8.13"/><line x1="-0.00" y1="-6.00" x2="-0.00" y2="-11.50"/><line x1="4.24" y1="-4.24" x2="8.13" y2="-8.13"/></g><circle r="6.600" fill="#ffc90e" stroke="#e8b21a" stroke-width="0.800"/></svg>
<svg style="left:1120px;top:271px" width="12.5" height="12.5" viewBox="0 0 13 13"><rect x="0.500" y="0.500" width="12" height="12" fill="#fff" stroke="#333"/><path d="M2.800 6.500L5.300 9.200L10.300 3.300" fill="none" stroke="#222" stroke-width="1.200"/></svg>
<span class="t" style='left:1135.3px;top:270.07px;font-size:11.2px;line-height:17px;font-weight:500;color:#111;transform:scaleX(0.7429);'>プレビューアニメ</span>
<svg style="left:1223.5px;top:271px" width="12.5" height="12.5" viewBox="0 0 13 13"><rect x="0.500" y="0.500" width="12" height="12" fill="#fff" stroke="#333"/><path d="M2.800 6.500L5.300 9.200L10.300 3.300" fill="none" stroke="#222" stroke-width="1.200"/></svg>
<span class="t" style='left:1239px;top:270.07px;font-size:11.2px;line-height:17px;font-weight:500;color:#111;transform:scaleX(1.0075);'>工具表示</span>
<div class="box" style="left:1074px;top:295px;width:240px;height:229px"></div>
<div class="btn" style="left:1119px;top:301px;width:183px;height:20px"></div>
<span class="t" style='left:1161.7px;top:303.27px;font-size:11.2px;line-height:17px;font-weight:500;color:#111;transform:scaleX(0.8535);'>工具経路をプレビュー</span>
<div class="btn" style="left:1119px;top:326px;width:31px;height:18px"></div>
<div class="btn dis" style="left:1156px;top:326px;width:31px;height:18px"></div>
<div class="btn" style="left:1193.5px;top:326px;width:31.5px;height:18px"></div>
<div class="btn" style="left:1230.5px;top:326px;width:31.5px;height:18px"></div>
<div class="btn dis" style="left:1268px;top:326px;width:31px;height:18px"></div>
<svg style="left:1119px;top:326px" width="180" height="18" viewBox="0 0 180 18"><path d="M9.500 4.500L15.500 9L9.500 13.500Z" fill="#1c1c8c"/><path d="M50 5V13M54.500 5V13" stroke="#a9a9a9" stroke-width="1.600"/><path d="M82.500 4.500L88.500 9L82.500 13.500Z" fill="#1c1c8c"/><path d="M90 4.500V13.500" stroke="#1c1c8c" stroke-width="1.800"/><path d="M116 4.500L122 9L116 13.500ZM121.500 4.500L127.500 9L121.500 13.500Z" fill="#1c1c8c"/><path d="M129 4.500V13.500" stroke="#1c1c8c" stroke-width="1.800"/><path d="M158 5.500H169" stroke="#a3a3a3" stroke-width="1.600"/><path d="M163.500 7.500L169 13H158Z" fill="#a3a3a3"/></svg>
<span class="t" style='left:1128.8px;top:348.07px;font-size:11.2px;line-height:17px;font-weight:500;color:#111;transform:scaleX(0.7886);'>スピード</span>
<div style="left:1169.500px;top:353px;width:126px;height:3.500px;background:#e7e7e7;border:1px solid #dcdcdc"></div>
<div style="left:1293.500px;top:347.500px;width:6px;height:13px;background:#0078d7"></div>
<div style="left:1118px;top:367px;width:184px;height:1px;background:#a0a0a0"></div>
<div class="btn dis" style="left:1119px;top:372px;width:183px;height:20px"></div>
<span class="t" style='left:1164.7px;top:374.07px;font-size:11.2px;line-height:17px;color:#a3a3a3;transform:scaleX(0.8124);'>全ての面をプレビュー</span>
<div class="btn" style="left:1119px;top:395px;width:184px;height:21px"></div>
<span class="t" style='left:1157.2px;top:397.97px;font-size:11.2px;line-height:17px;font-weight:500;color:#111;transform:scaleX(0.8710);'>全工具経路をプレビュー</span>
<div class="btn" style="left:1119px;top:420px;width:186px;height:21px"></div>
<span class="t" style='left:1151.9px;top:422.97px;font-size:11.2px;line-height:17px;font-weight:500;color:#111;transform:scaleX(0.8878);'>可視工具経路をプレビュー</span>
<div class="btn" style="left:1119px;top:445px;width:89px;height:21px"></div>
<span class="t" style='left:1126.1px;top:447.87px;font-size:11.2px;line-height:17px;font-weight:500;color:#111;transform:scaleX(0.7209);'>プレビューリセット</span>
<div class="btn dis" style="left:1213px;top:445px;width:89px;height:21px"></div>
<span class="t" style='left:1230.4px;top:447.87px;font-size:11.2px;line-height:17px;color:#a3a3a3;transform:scaleX(0.9705);'>最後を取消</span>
<div class="btn" style="left:1119px;top:470px;width:186px;height:21px"></div>
<span class="t" style='left:1156.6px;top:472.47px;font-size:11.2px;line-height:17px;font-weight:500;color:#111;transform:scaleX(0.8118);'>プレビューイメージを保存</span>
<span class="t" style='left:1117.4px;top:494.16px;font-size:11px;line-height:17px;font-weight:500;color:#111;transform:scaleX(0.8977);'>削除するには、3Dビュー画面上、破棄部</span>
<span class="t" style='left:1117.4px;top:506.56px;font-size:11px;line-height:17px;font-weight:500;color:#111;transform:scaleX(0.7454);'>分でダブルクリックしてください。</span>
<div class="btn" style="left:1244px;top:530px;width:70px;height:20px"></div>
<span class="t" style='left:1263.8px;top:532.87px;font-size:11.2px;line-height:17px;font-weight:500;color:#111;transform:scaleX(0.8458);'>閉じる</span>
<div style="left:1233.500px;top:521px;width:91px;height:37.500px;border:3px solid #e61f2b;border-radius:5px"></div>
<div style="left:1059px;top:557px;width:175px;height:1px;background:#a3b4c6"></div><div style="left:1059px;top:558px;width:175px;height:1px;background:#ecf1f8"></div><div style="left:1059px;top:559px;width:175px;height:1px;background:#e2eaf5"></div>
<svg style="left:1071.5px;top:567px" width="12.5" height="12.5" viewBox="0 0 13 13"><rect x="0.500" y="0.500" width="12" height="12" fill="#fff" stroke="#222"/><path d="M2.800 6.500L5.300 9.200L10.300 3.300" fill="none" stroke="#222" stroke-width="1.200"/></svg>
<span class="t" style='left:1090.9px;top:565.12px;font-size:12px;line-height:18px;font-weight:900;transform:scaleX(1.0163);'>工具経路</span>
<div style="left:1273.500px;top:565px;width:20px;height:17px;background:#cccccc"></div>
<div style="left:1296px;top:565px;width:19.500px;height:17px;background:#cccccc"></div>
<svg style="left:1273.500px;top:565px" width="42" height="17" viewBox="0 0 42 17" fill="none" stroke="#e6e6e6" stroke-width="1.100"><path d="M10 2.500L5.500 7.500H8.500V14.500H11.500V7.500H14.500Z"/><path d="M32.300 14.500L27.800 9.500H30.800V2.500H33.800V9.500H36.800Z"/></svg>
<div style="left:1070px;top:584.500px;width:247px;height:1px;background:#bcc3cc"></div>
<div style="left:1070.500px;top:595px;width:12px;height:0;border-top:1px dotted #808080"></div>
<svg style="left:1082.500px;top:588px" width="12.500" height="12.500" viewBox="0 0 13 13"><rect x="0.500" y="0.500" width="12" height="12" fill="#fff" stroke="#707070"/><rect x="1.500" y="1.500" width="10" height="10" fill="none" stroke="#c8c8c8"/><path d="M3.200 6.500L5.500 9.500L9.800 3.500" fill="none" stroke="#2b3f9e" stroke-width="1.500"/></svg>
<svg style="left:1101px;top:587.500px" width="7" height="15" viewBox="0 0 7 15"><path d="M1.500 0.500H5.500V12L3.500 14.500L1.500 12Z" fill="#cfa14e" stroke="#a88a5a" stroke-width="0.500"/><path d="M1.500 3L5.500 5.500M1.500 6.500L5.500 9M1.500 10L5.500 12" stroke="#e9dcc0" stroke-width="1"/></svg>
<div style="left:1115px;top:588px;width:48.500px;height:12px;background:#0a78d7"></div>
<span class="t" style='left:1116.5px;top:586.46px;font-size:11px;line-height:17px;font-weight:700;color:#fff;transform:scaleX(0.8555);'>ポケット 1</span>
<div style="left:1061.500px;top:579.500px;width:110px;height:28.500px;border:3px solid #e61f2b;border-radius:5px"></div>
<svg style="left:1078px;top:86px" width="32" height="36" viewBox="1078 86 32 36"><path d="M1080.3 104.2L1097.0 94.0L1106.6 108.2L1087.2 118.2Z" fill="url(#slabT)" /><path d="M1080.3 104.2L1087.2 118.2L1087.3 119.8L1080.4 105.6Z" fill="#b5692c" /><path d="M1087.2 118.2L1106.6 108.2L1106.0 115.0L1087.3 119.8Z" fill="#a85c20" /><path d="M1096.5 94.0L1101.2 92.9L1106.6 107.8L1099.8 109.2Z" fill="#e6a466" /><path d="M1099.8 109.2L1106.6 107.8L1106.0 115.0L1099.2 116.6Z" fill="#b2601f" /><circle cx="1091.800" cy="108.200" r="6.500" fill="url(#ballG)"/><rect x="1091" y="88.700" width="4.700" height="14" fill="url(#shaftG)"/></svg>
<svg style="left:1080px;top:132px" width="36" height="28" viewBox="1080 132 36 28"><path d="M1088.6 155.6L1112.1 152.0L1112.0 153.7L1088.7 157.3Z" fill="url(#slabS)" /><path d="M1082.8 137.8L1088.6 155.6L1088.7 157.3L1082.8 139.5Z" fill="#b5692c" /><path d="M1082.8 137.8L1107.4 134.2L1112.1 152.0L1088.6 155.6Z" fill="url(#slabT)" stroke="#d08a4c" stroke-width="0.4"/></svg>
<svg style="left:1080px;top:178px" width="36" height="28" viewBox="1080 178 36 28"><path d="M1088.6 202.2L1112.6 198.0L1112.5 199.7L1088.7 203.9Z" fill="url(#slabS)" /><path d="M1082.8 183.9L1088.6 202.2L1088.7 203.9L1082.8 185.6Z" fill="#b5692c" /><path d="M1082.8 183.9L1107.4 180.2L1112.6 198.0L1088.6 202.2Z" fill="url(#slabT)" stroke="#d08a4c" stroke-width="0.4"/><ellipse cx="1098.200" cy="191" rx="6.800" ry="5.800" fill="#e9a566" transform="rotate(-12 1098 191)"/><ellipse cx="1098.5" cy="191.1" rx="8" ry="6.9" fill="none" stroke="#b8741a" stroke-width="2.3" transform="rotate(-12 1098 190.8)" opacity="0.600"/><ellipse cx="1098" cy="190.8" rx="8" ry="6.9" fill="none" stroke="#efb313" stroke-width="2.3" transform="rotate(-12 1098 190.8)"/></svg>
<svg style="left:1080px;top:262px" width="36" height="28" viewBox="1080 262 36 28"><path d="M1088.8 286.8L1113.5 283.2L1113.4 284.9L1088.9 288.5Z" fill="url(#slabS)" /><path d="M1083.3 267.2L1088.8 286.8L1088.9 288.5L1083.3 268.9Z" fill="#b5692c" /><path d="M1083.3 267.2L1108.5 264.0L1113.5 283.2L1088.8 286.8Z" fill="url(#slabT)" stroke="#d08a4c" stroke-width="0.4"/><path d="M1100.44 268.83A7.4 6.6 0 1 1 1092.65 277.11" fill="none" stroke="#efb313" stroke-width="2.4" stroke-linecap="round" transform="rotate(-12 1099.8 275.4)"/><path d="M1088.6 271.8l2.6 -2.0l2.6 1.6l-2.4 2.4z" fill="#e8eef2" stroke="#8f979c" stroke-width="0.400"/></svg>
<svg style="left:1080px;top:303px" width="28" height="22" viewBox="1080 303 28 22"><path d="M1086.5 320.3L1103.9 318.0L1103.8 319.2L1086.6 321.5Z" fill="url(#slabS)" /><path d="M1082.4 307.0L1086.5 320.3L1086.6 321.5L1082.4 308.2Z" fill="#b5692c" /><path d="M1082.4 307.0L1100.3 305.2L1103.9 318.0L1086.5 320.3Z" fill="url(#slabT)" stroke="#d08a4c" stroke-width="0.4"/><path d="M1094.25 308.02A5.2 4.6 0 1 1 1088.78 313.79" fill="none" stroke="#efb313" stroke-width="2" stroke-linecap="round" transform="rotate(-12 1093.8 312.6)"/><path d="M1085.9 310.0l2.1 -1.6l2.1 1.3l-1.9 1.9z" fill="#e8eef2" stroke="#8f979c" stroke-width="0.400"/></svg>
<svg style="left:1080px;top:372px" width="28" height="24" viewBox="1080 372 28 24"><ellipse cx="1092.200" cy="388.800" rx="4.200" ry="2.600" fill="#a8662c"/><path d="M1087.0 389.4L1102.2 387.4L1102.1 388.6L1087.1 390.6Z" fill="url(#slabS)" /><path d="M1082.8 376.4L1087.0 389.4L1087.1 390.6L1082.8 377.6Z" fill="#b5692c" /><path d="M1082.8 376.4L1099.5 374.8L1102.2 387.4L1087.0 389.4Z" fill="url(#slabT)" stroke="#d08a4c" stroke-width="0.4"/><circle cx="1092.200" cy="380.600" r="5.800" fill="url(#ballW)"/></svg>
<svg style="left:1080px;top:395px" width="36" height="24" viewBox="1080 395 36 24"><path d="M1095.4 415.6L1112.6 413.0L1112.5 414.2L1095.5 416.8Z" fill="url(#slabS)" /><path d="M1094.8 400.4L1095.4 415.6L1095.5 416.8L1094.8 401.6Z" fill="#b5692c" /><path d="M1094.8 400.4L1109.5 399.4L1112.6 413.0L1095.4 415.6Z" fill="url(#slabT)" stroke="#d08a4c" stroke-width="0.4"/><path d="M1104.24 402.11A4.2 5.2 0 0 1 1103.53 412.12" fill="none" stroke="#efb313" stroke-width="2" stroke-linecap="round" transform="rotate(-10 1102.8 407)"/><path d="M1087.0 413.5L1104.2 410.9L1104.1 412.1L1087.1 414.7Z" fill="url(#slabS)" /><path d="M1082.8 399.4L1087.0 413.5L1087.1 414.7L1082.8 400.6Z" fill="#b5692c" /><path d="M1082.8 399.4L1099.5 397.8L1104.2 410.9L1087.0 413.5Z" fill="url(#slabT)" stroke="#d08a4c" stroke-width="0.4"/><path d="M1094.25 401.02A5.2 4.6 0 1 1 1088.78 406.79" fill="none" stroke="#efb313" stroke-width="2" stroke-linecap="round" transform="rotate(-12 1093.8 405.6)"/><path d="M1085.9 402.3l2.1 -1.6l2.1 1.3l-1.9 1.9z" fill="#e8eef2" stroke="#8f979c" stroke-width="0.400"/></svg>
<svg style="left:1080px;top:419.6px" width="36" height="24" viewBox="1080 419.6 36 24"><path d="M1095.4 440.2L1112.6 437.6L1112.5 438.8L1095.5 441.4Z" fill="url(#slabS)" /><path d="M1094.8 425.0L1095.4 440.2L1095.5 441.4L1094.8 426.2Z" fill="#b5692c" /><path d="M1094.8 425.0L1109.5 424.0L1112.6 437.6L1095.4 440.2Z" fill="url(#slabT)" stroke="#d08a4c" stroke-width="0.4"/><path d="M1104.24 426.71A4.2 5.2 0 0 1 1103.53 436.72" fill="none" stroke="#6a4a9a" stroke-width="2" stroke-linecap="round" transform="rotate(-10 1102.8 431.6)"/><path d="M1087.0 438.1L1104.2 435.5L1104.1 436.7L1087.1 439.3Z" fill="url(#slabS)" /><path d="M1082.8 424.0L1087.0 438.1L1087.1 439.3L1082.8 425.2Z" fill="#b5692c" /><path d="M1082.8 424.0L1099.5 422.4L1104.2 435.5L1087.0 438.1Z" fill="url(#slabT)" stroke="#d08a4c" stroke-width="0.4"/><path d="M1094.25 425.62A5.2 4.6 0 1 1 1088.78 431.39" fill="none" stroke="#6a4a9a" stroke-width="2" stroke-linecap="round" transform="rotate(-12 1093.8 430.2)"/><path d="M1085.9 426.9l2.1 -1.6l2.1 1.3l-1.9 1.9z" fill="#e8eef2" stroke="#8f979c" stroke-width="0.400"/></svg>
<svg style="left:1080px;top:447px" width="32" height="24" viewBox="1080 447 32 24"><path d="M1088.0 467.1L1107.4 464.0L1107.3 465.7L1088.1 468.8Z" fill="url(#slabS)" /><path d="M1083.8 452.5L1088.0 467.1L1088.1 468.8L1083.8 454.2Z" fill="#b5692c" /><path d="M1083.8 452.5L1102.7 449.8L1107.4 464.0L1088.0 467.1Z" fill="url(#slabT)" stroke="#d08a4c" stroke-width="0.4"/></svg>
<svg style="left:1080px;top:468px" width="32" height="24" viewBox="1080 468 32 24"><path d="M1089.1 488.0L1107.4 485.4L1107.3 486.6L1089.2 489.2Z" fill="url(#slabS)" /><path d="M1086.0 474.0L1089.1 488.0L1089.2 489.2L1086.0 475.2Z" fill="#b5692c" /><path d="M1086.0 474.0L1103.2 471.8L1107.4 485.4L1089.1 488.0Z" fill="url(#slabT)" stroke="#d08a4c" stroke-width="0.4"/><path d="M1100.89 475.05A2.6 4.2 0 0 1 1100.45 483.14" fill="none" stroke="#efb313" stroke-width="2" stroke-linecap="round" transform="rotate(-10 1100 479)"/><rect x="1082.800" y="469.700" width="13" height="12.600" rx="1" fill="#5a8fe2" stroke="#3f6fc4" stroke-width="0.600"/><rect x="1084.800" y="470.500" width="9" height="5.800" fill="#fff"/><rect x="1084.800" y="470.500" width="9" height="1.400" fill="#e05050"/><rect x="1086.300" y="478.300" width="6.500" height="4" fill="#e4e8f0"/><rect x="1087.300" y="479" width="1.800" height="3" fill="#5a6f9a"/></svg>
<svg style="left:1082px;top:496px" width="30" height="24" viewBox="1082 496 30 24"><path d="M1085.800 500.800L1102 496.400L1107.500 511.700L1090.300 516.200Z" fill="#f7e1cf"/><circle cx="1094.200" cy="506.300" r="4.300" fill="#de9457"/><circle cx="1093.300" cy="505.300" r="2.200" fill="#e8a870"/><path d="M1099.300 501.800V515.600L1102.300 512.700L1104.500 516.900L1106.200 516.100L1104.100 512.100H1108Z" fill="#fff" stroke="#2a2f3a" stroke-width="0.900"/></svg>
<div style="left:2px;top:745px;width:1324px;height:17px;background:#f0f0f0;border-top:1px solid #e6e6e6"></div>
<div style="left:1060px;top:744px;width:266px;height:2px;background:#fafcfe;border-top:1px solid #8292a6"></div>
<div style="left:1308px;top:746px;width:1px;height:16px;background:#d9d9d9"></div>
<svg style="left:1312px;top:750px" width="12" height="12" viewBox="0 0 12 12" fill="#bdbdbd"><rect x="9" y="3" width="2" height="2"/><rect x="6" y="6" width="2" height="2"/><rect x="9" y="6" width="2" height="2"/><rect x="3" y="9" width="2" height="2"/><rect x="6" y="9" width="2" height="2"/><rect x="9" y="9" width="2" height="2"/></svg>
<span class="t" style='left:3px;top:746.66px;font-size:11px;line-height:17px;color:#222;transform:scaleX(0.7290);'>レディ</span>
<span class="t" style='left:802.8px;top:746.66px;font-size:11px;line-height:17px;color:#222;transform:scaleX(0.9448);'>X:115.7915 Y: 96.4628</span>
<div style="left:961px;top:747px;width:1px;height:14px;background:#d0d0d0"></div>
<span class="t" style='left:966.2px;top:746.66px;font-size:11px;line-height:17px;color:#222;transform:scaleX(0.9384);'>W:79.000</span>
<span class="t" style='left:1019.6px;top:746.66px;font-size:11px;line-height:17px;color:#222;transform:scaleX(0.9405);'>H:96.000</span>
<span class="t" style='left:1068px;top:746.66px;font-size:11px;line-height:17px;color:#222;transform:scaleX(0.8235);'>S:2</span>
</body></html>
